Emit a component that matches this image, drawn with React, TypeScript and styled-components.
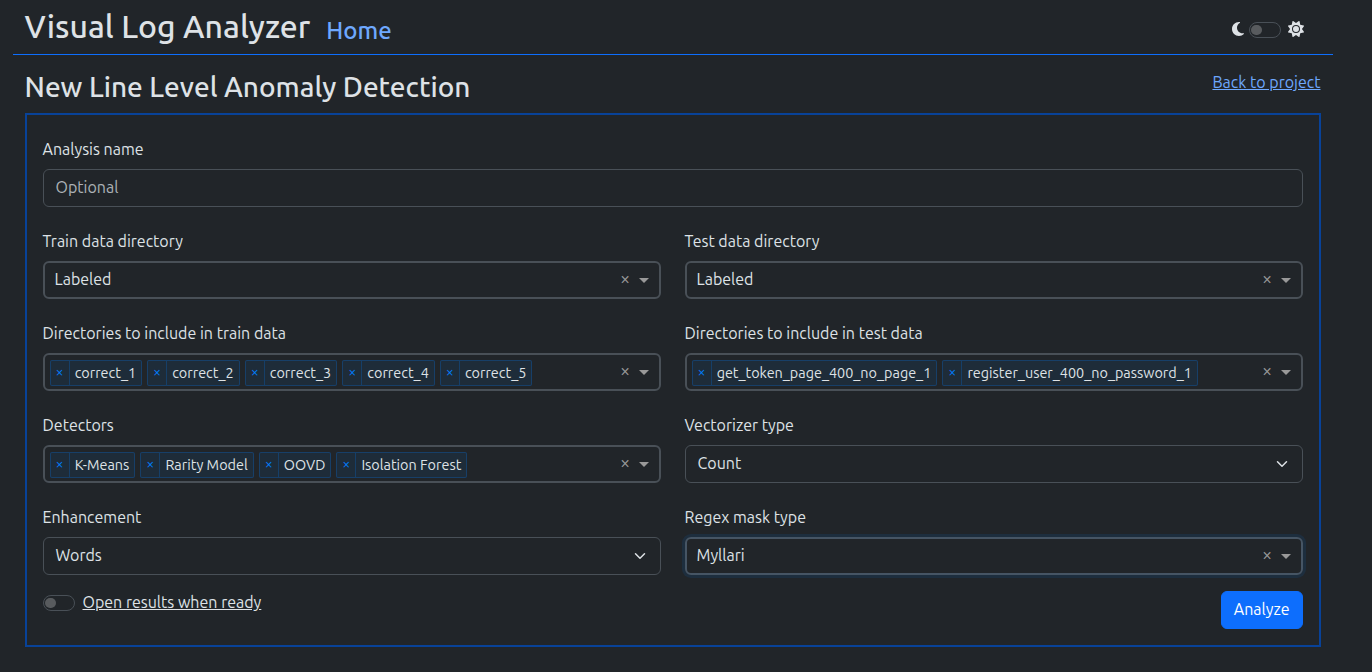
import React from 'react';
import styled, { createGlobalStyle, css } from 'styled-components';
import { FaMoon, FaSun } from 'react-icons/fa6';

const GlobalStyle = createGlobalStyle`
  *, *::before, *::after { box-sizing: border-box; }
  body {
    margin: 0;
    min-height: 100vh;
    background: #212529;
    color: #dee2e6;
    font: 400 16px/1.5 Ubuntu, "Noto Sans", sans-serif;
  }
`;

const Page = styled.div`
  width: 1320px;
  margin-left: 12.5px;
`;

const Header = styled.header`
  display: flex;
  align-items: flex-start;
  justify-content: space-between;
  height: 55px;
  padding: 7px 28.5px 0 12px;
  border-bottom: 1px solid #0d6efd;
`;

const Brand = styled.div`
  display: flex;
  align-items: flex-start;
  gap: 16px;
`;

const BrandTitle = styled.h2`
  margin: 0;
  font-size: 32px;
  font-weight: 500;
  line-height: 38px;
`;

const NavLink = styled.a`
  padding-top: 6px;
  color: #6ea8fe;
  font-size: 24px;
  font-weight: 500;
  line-height: 36px;
`;

const ThemeToggle = styled.div`
  display: flex;
  align-items: flex-start;
  margin-top: 15px;
  height: 16px;
`;

const MoonIcon = styled(FaMoon)`
  margin: -1px 2.5px 0 0;
`;

const SunIcon = styled(FaSun)`
  margin: -1px 0 0 7.5px;
`;

const Switch = styled.span`
  display: flex;
  align-items: center;
  flex: none;
  width: 32px;
  height: 16px;
  padding-left: 1.75px;
  border: 1px solid #495057;
  border-radius: 16px;

  &::before {
    content: "";
    width: 10.5px;
    height: 10.5px;
    border-radius: 50%;
    background: rgba(255, 255, 255, 0.25);
  }
`;

const Main = styled.main`
  padding: 0 12px;
`;

const TitleRow = styled.div`
  display: flex;
  justify-content: space-between;
  align-items: flex-start;
  height: 58px;
  padding-top: 15px;
`;

const PageTitle = styled.h3`
  margin: 0;
  font-size: 28px;
  font-weight: 500;
  line-height: 1.2;
`;

const BackLink = styled.a`
  color: #6ea8fe;
  text-decoration: underline;
`;

const Form = styled.form`
  display: grid;
  grid-template-columns: 1fr 1fr;
  gap: 16px 24px;
  padding: 16px;
  border: 2px solid #084298;
`;

const FieldBox = styled.div<{ $wide?: boolean }>`
  display: flex;
  flex-direction: column;
  gap: 8px;
  min-width: 0;
  padding-top: 6px;
  ${({ $wide }) => $wide && css`grid-column: 1 / -1;`}
`;

const Label = styled.label`
  line-height: 24px;
`;

const TextInput = styled.input`
  height: 38px;
  padding: 5px 12px 7px;
  border: 1px solid #495057;
  border-radius: 6px;
  background: #212529;
  color: inherit;
  font: inherit;

  &::placeholder { color: rgba(222, 226, 230, 0.75); opacity: 1; }
`;

const NativeSelect = styled.div`
  display: flex;
  align-items: center;
  justify-content: space-between;
  height: 38px;
  padding: 0 12px;
  border: 1px solid #495057;
  border-radius: 6px;
`;

const SelectValue = styled.span`
  padding-bottom: 2px;
`;

const Dropdown = styled.div<{ $focused?: boolean }>`
  display: flex;
  align-items: center;
  height: 38px;
  padding-right: 10px;
  border: 2px solid #495057;
  border-radius: 6px;
  ${({ $focused }) => $focused && css`
    border-color: #465564;
    box-shadow: 0 0 0 3px rgba(0, 126, 255, 0.1);
  `}
`;

const DropdownValue = styled.span`
  flex: 1;
  padding: 0 0 2px 10px;
`;

const Tags = styled.div`
  display: flex;
  flex: 1;
  align-self: flex-start;
  gap: 5px;
  padding: 5px 0 0 5px;
`;

const Tag = styled.span`
  display: flex;
  border: 1px solid rgba(0, 126, 255, 0.24);
  border-radius: 2px;
  background: rgba(0, 126, 255, 0.08);
  font-size: 14.4px;
  line-height: 20.16px;
`;

const TagRemove = styled.span`
  padding: 1px 5px 3px;
  border-right: 1px solid rgba(0, 126, 255, 0.24);
  color: #007eff;
`;

const TagLabel = styled.span`
  padding: 2px 5px;
`;

const Clear = styled.span`
  width: 17px;
  padding-bottom: 4px;
  color: #999;
  font-size: 18px;
  line-height: 30px;
  text-align: center;
`;

const Arrow = styled.span`
  margin-left: 5px;
  border: solid transparent;
  border-width: 5px 5px 0;
  border-top-color: #999;
`;

const Footer = styled.div`
  grid-column: 1 / -1;
  display: flex;
  justify-content: space-between;
  align-items: flex-start;
`;

const SwitchField = styled.div`
  display: flex;
  align-items: center;
  gap: 8px;
  height: 24px;
`;

const SwitchLabel = styled.span`
  padding-bottom: 2px;
  text-decoration: underline;
`;

const SubmitButton = styled.button`
  height: 38px;
  padding: 5px 12px 7px;
  border: 1px solid #0d6efd;
  border-radius: 6px;
  background: #0d6efd;
  color: #fff;
  font: inherit;
  line-height: 24px;
`;

function Field({ label, wide, children }: { label: string; wide?: boolean; children: React.ReactNode }) {
  return (
    <FieldBox $wide={wide}>
      <Label>{label}</Label>
      {children}
    </FieldBox>
  );
}

function Select({ value }: { value: string }) {
  return (
    <NativeSelect>
      <SelectValue>{value}</SelectValue>
      <svg width="16" height="12" viewBox="0 0 16 16" fill="none" stroke="#dee2e6" strokeWidth="2" strokeLinecap="round" strokeLinejoin="round">
        <path d="m2 5 6 6 6-6" />
      </svg>
    </NativeSelect>
  );
}

function Combo({ value, tags, focused }: { value?: string; tags?: string[]; focused?: boolean }) {
  return (
    <Dropdown $focused={focused}>
      {tags ? (
        <Tags>
          {tags.map((tag) => (
            <Tag key={tag}>
              <TagRemove>×</TagRemove>
              <TagLabel>{tag}</TagLabel>
            </Tag>
          ))}
        </Tags>
      ) : (
        <DropdownValue>{value}</DropdownValue>
      )}
      <Clear>×</Clear>
      <Arrow />
    </Dropdown>
  );
}

export default function App() {
  return (
    <>
      <GlobalStyle />
      <Page>
        <Header>
          <Brand>
            <BrandTitle>Visual Log Analyzer</BrandTitle>
            <NavLink>Home</NavLink>
          </Brand>
          <ThemeToggle>
            <MoonIcon size={16} />
            <Switch />
            <SunIcon size={16} />
          </ThemeToggle>
        </Header>
        <Main>
          <TitleRow>
            <PageTitle>New Line Level Anomaly Detection</PageTitle>
            <BackLink>Back to project</BackLink>
          </TitleRow>
          <Form>
            <Field label="Analysis name" wide>
              <TextInput placeholder="Optional" />
            </Field>
            <Field label="Train data directory"><Combo value="Labeled" /></Field>
            <Field label="Test data directory"><Combo value="Labeled" /></Field>
            <Field label="Directories to include in train data">
              <Combo tags={['correct_1', 'correct_2', 'correct_3', 'correct_4', 'correct_5']} />
            </Field>
            <Field label="Directories to include in test data">
              <Combo tags={['get_token_page_400_no_page_1', 'register_user_400_no_password_1']} />
            </Field>
            <Field label="Detectors">
              <Combo tags={['K-Means', 'Rarity Model', 'OOVD', 'Isolation Forest']} />
            </Field>
            <Field label="Vectorizer type"><Select value="Count" /></Field>
            <Field label="Enhancement"><Select value="Words" /></Field>
            <Field label="Regex mask type"><Combo value="Myllari" focused /></Field>
            <Footer>
              <SwitchField>
                <Switch />
                <SwitchLabel>Open results when ready</SwitchLabel>
              </SwitchField>
              <SubmitButton type="button">Analyze</SubmitButton>
            </Footer>
          </Form>
        </Main>
      </Page>
    </>
  );
}
